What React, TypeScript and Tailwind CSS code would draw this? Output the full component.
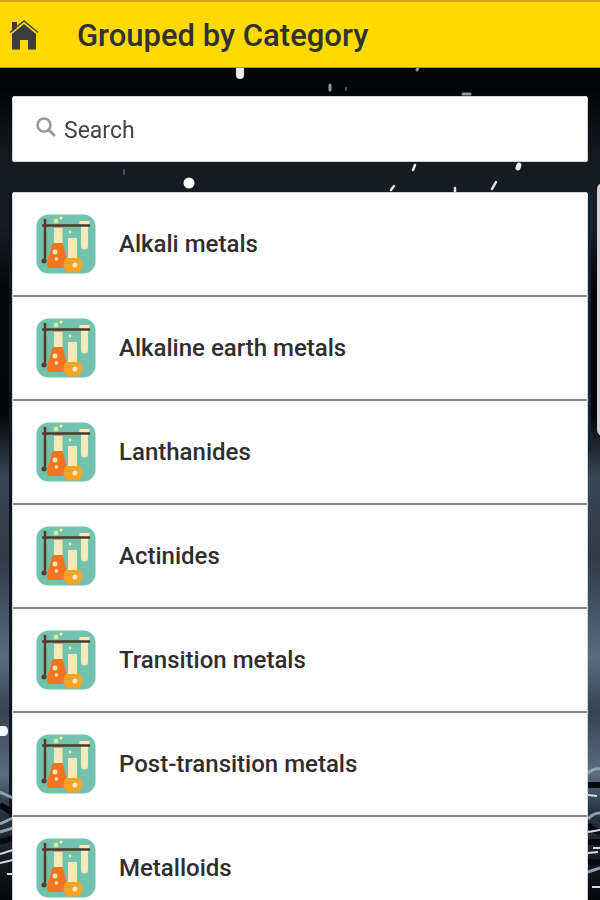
const CATEGORIES = [
  "Alkali metals",
  "Alkaline earth metals",
  "Lanthanides",
  "Actinides",
  "Transition metals",
  "Post-transition metals",
  "Metalloids",
];

export default function App() {
  return (
    <div className="relative min-h-screen font-[Roboto,sans-serif] text-[#2e2e2e]">
      <RainBackdrop />

      <header className="relative flex h-[68px] items-center gap-[37px] border-t-2 border-b border-t-[#cfa606] border-b-[#a39a12] bg-[#ffd900] px-2 pt-[3px]">
        <a href="#home" aria-label="Home">
          <HomeIcon />
        </a>
        <h1 className="text-[31px] leading-10 font-medium text-[#2f3133]">
          Grouped by Category
        </h1>
      </header>

      <main className="relative px-3 pt-7">
        <label className="flex h-[66px] items-center gap-2 rounded-xs border border-gray-300 bg-white px-[23px] pt-[3px]">
          <SearchIcon />
          <input
            type="search"
            aria-label="Search"
            placeholder="Search"
            className="min-w-0 flex-1 bg-transparent text-[23px] leading-8 outline-none placeholder:text-[#444444]"
          />
        </label>

        <ul className="mt-[30px] rounded-t-xs border border-gray-300 bg-white">
          {CATEGORIES.map((category) => (
            <li key={category} className="border-b-2 border-[#878787]">
              <a
                href="#category"
                className="flex h-[102px] items-center gap-[23px] px-[23px] text-2xl font-medium"
              >
                <LabIcon />
                {category}
              </a>
            </li>
          ))}
        </ul>
      </main>
    </div>
  );
}

function HomeIcon() {
  return (
    <svg className="h-8 w-8" viewBox="0 0 32 32" aria-hidden="true">
      <path d="M4 2h5v6l-5 4z" fill="#3b3b3d" />
      <path d="M2 12.500 16 1l14 11.500" fill="none" stroke="#4a4634" strokeWidth="1.500" />
      <path d="M4 14 16 4l12 10v15.500h-8V20h-8v9.500H4z" fill="#3b3b40" />
    </svg>
  );
}

function SearchIcon() {
  return (
    <svg className="mb-2 h-5 w-5" viewBox="0 0 20 20" fill="none" stroke="#999" aria-hidden="true">
      <circle cx="8" cy="8" r="6.500" strokeWidth="2.500" />
      <path d="m13 13 5 5" strokeWidth="3" strokeLinecap="round" />
    </svg>
  );
}

function LabIcon() {
  return (
    <svg className="h-[60px] w-[60px] shrink-0" viewBox="0 0 60 60" aria-hidden="true">
      <rect x="0.500" y="0.500" width="59" height="59" rx="12" fill="#73c2ad" />

      {/* glassware */}
      <path
        d="M18 14h8.500v16H18zM32 24h9v22h-9zM43.500 7h10v3H52v22a3.500 3.500 0 0 1-7 0V10h-1.500z"
        fill="#f6ebb5"
      />
      <path d="M16.500 29h10.500l4 19q1 6-4 6H15q-5 0-4-6z" fill="#f47320" />
      <path d="M30 44h14q2.500 3 2.500 6 0 5-4.500 8.500H32Q27.500 55 27.500 50q0-3 2.500-6z" fill="#f7a426" />

      {/* stand */}
      <path d="M6 11.500h48M9 5v42" stroke="#56382c" strokeWidth="2.500" />
      <circle cx="8" cy="47" r="2.500" fill="#56382c" />

      <g fill="#f6ebb5">
        <circle cx="19" cy="38" r="2.500" />
        <circle cx="20.500" cy="45" r="1.800" />
        <circle cx="39" cy="51" r="2.500" />
        <circle cx="20" cy="7" r="2.300" />
        <circle cx="25" cy="4" r="1.600" />
        <circle cx="34" cy="18" r="1.500" />
      </g>
    </svg>
  );
}

function RainBackdrop() {
  return (
    <svg
      className="fixed inset-0 h-full w-full bg-black"
      viewBox="0 0 600 900"
      preserveAspectRatio="none"
      aria-hidden="true"
    >
      <defs>
        <linearGradient id="night" x1="0" y1="0" x2="0" y2="1">
          <stop offset="0.100" stopColor="#030406" />
          <stop offset="0.180" stopColor="#161b22" />
          <stop offset="0.250" stopColor="#181d25" />
          <stop offset="0.320" stopColor="#050608" />
          <stop offset="0.460" stopColor="#030507" />
          <stop offset="0.530" stopColor="#3a4652" />
          <stop offset="0.620" stopColor="#303a45" />
          <stop offset="0.730" stopColor="#5b6a7c" />
          <stop offset="0.790" stopColor="#38434f" />
          <stop offset="0.860" stopColor="#5d6c80" />
          <stop offset="0.900" stopColor="#2b3541" />
          <stop offset="1" stopColor="#05070b" />
        </linearGradient>
      </defs>
      <rect width="600" height="900" fill="url(#night)" />
      <rect x="588" y="192" width="3" height="260" fill="#142333" />
      <path d="M10.500 192v630" stroke="#10161f" strokeWidth="3" />

      {/* rain */}
      <g stroke="#e6eaf5" strokeLinecap="round">
        <path d="M240 69v6" strokeWidth="8" />
        <path d="m519 165-1 3" strokeWidth="5" />
        <path d="m415 165-2 5M496 182l-4 7M455 188v4M391 190l3-4" strokeWidth="2.500" />
        <path d="M330 85v5M418 68l-1 2M463 94h7" stroke="#9493ae" strokeWidth="3" />
        <path d="M346 88v2M124 170v4" stroke="#4b505c" strokeWidth="2" />
      </g>
      <circle cx="189" cy="183" r="5.500" fill="#fff" />
      <path d="M0 726h5q3 1 3 5t-3 5H0z" fill="#f5f8fb" />

      {/* ripples */}
      <g fill="none" stroke="#8fa0b5" strokeWidth="3">
        <path d="m0 792 13 6M0 824l13-6M0 832l13-4" />
        <path d="M588 773q6-5 12-4M588 819q5-6 12-6M588 872l12-4" />
      </g>
      <path
        d="m0 805 13 8M0 842l13-4M588 785h12M588 824q3 6 12 8M588 842h12M588 862h12"
        stroke="#05080c"
        strokeWidth="6"
        fill="none"
      />
      <g fill="none" stroke="#d3dae2" strokeWidth="2">
        <path d="m0 854 13-4M0 863l13-3M7 874h6" />
        <path d="m588 795 9 1M588 832l12-2M588 853l10-1M593 848h7M592 887h8" />
      </g>
      <rect x="597" y="183" width="20" height="253" rx="6" fill="#d3d1d3" />
    </svg>
  );
}
